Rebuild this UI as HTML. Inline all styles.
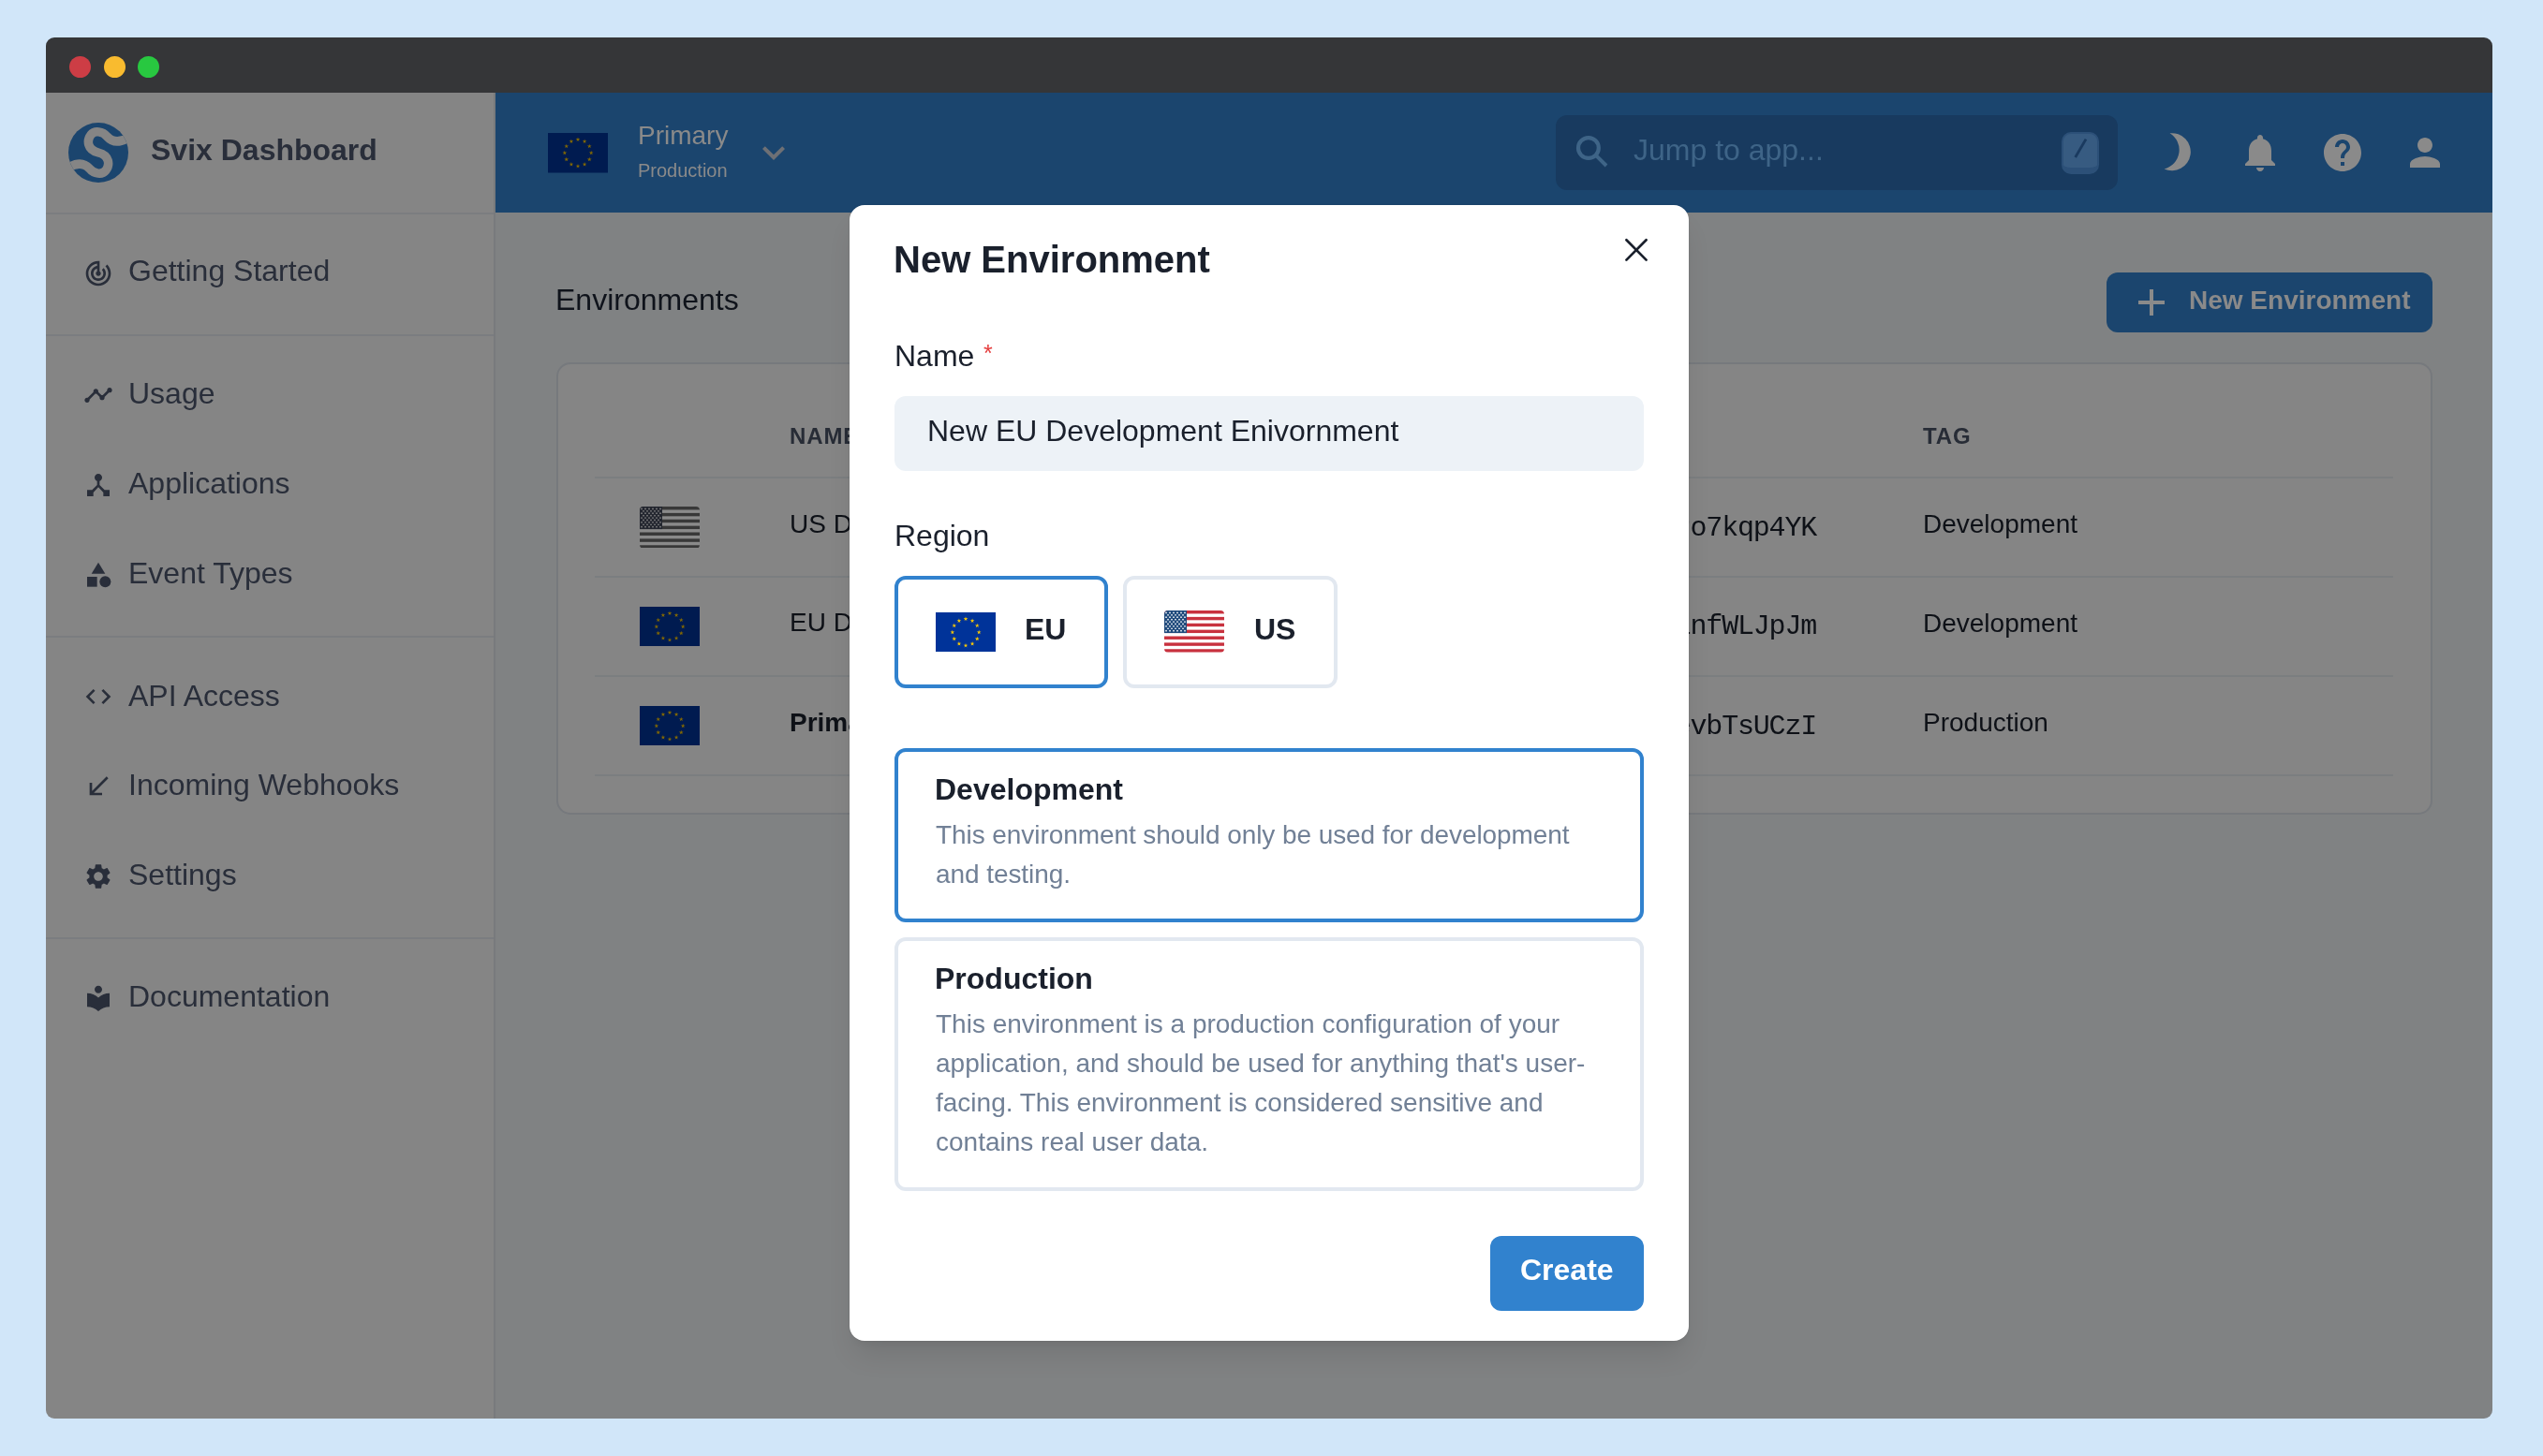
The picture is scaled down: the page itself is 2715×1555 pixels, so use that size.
<!DOCTYPE html>
<html><head><meta charset="utf-8">
<style>
*{box-sizing:border-box;margin:0;padding:0}
html,body{width:2715px;height:1555px;overflow:hidden}
body{background:#d1e6f9;font-family:"Liberation Sans",sans-serif;position:relative}
.a{position:absolute}
.t{position:absolute;white-space:nowrap;line-height:1;will-change:transform}
#win{position:absolute;left:0;top:0;width:2715px;height:1555px;clip-path:inset(40px 54px 40px 49px round 9px)}
.nav{font-size:32px;color:#292e3a;left:136.5px}
.ic{position:absolute;left:89px;width:32px;height:32px;fill:#292e3a}
.hd{fill:#858585}
.th{font-size:24px;font-weight:700;letter-spacing:0.9px;color:#272c36}
.td{font-size:28px;color:#0e1117}
.mono{font-family:"Liberation Mono",monospace;font-size:30px;letter-spacing:-1.2px;color:#0e1117;text-align:right;width:400px;left:1538.5px}
.hl{position:absolute;left:635px;width:1920px;height:2px;background:#7b7e80}
</style></head><body>
<div id="win">
  <!-- title bar -->
  <div class="a" style="left:0;top:0;width:2715px;height:99px;background:#353638"></div>
  <div class="a" style="left:74px;top:59.5px;width:23px;height:23px;border-radius:50%;background:#cd3d45"></div>
  <div class="a" style="left:110.8px;top:59.5px;width:23px;height:23px;border-radius:50%;background:#f9bb2f"></div>
  <div class="a" style="left:147.3px;top:59.5px;width:23px;height:23px;border-radius:50%;background:#28c840"></div>

  <!-- sidebar -->
  <div class="a" style="left:0;top:99px;width:529px;height:1456px;background:#858585"></div>
  <div class="a" style="left:527px;top:99px;width:2px;height:1456px;background:#787a7d"></div>
  <div class="a" style="left:0;top:227px;width:527px;height:2px;background:#7b7d80"></div>
  <div class="a" style="left:0;top:356.5px;width:527px;height:2px;background:#7b7d80"></div>
  <div class="a" style="left:0;top:679px;width:527px;height:2px;background:#7b7d80"></div>
  <div class="a" style="left:0;top:1001px;width:527px;height:2px;background:#7b7d80"></div>

  <!-- logo -->
  <svg class="a" style="left:73px;top:131px" width="64" height="64" viewBox="0 0 64 64">
    <defs><clipPath id="lc"><circle cx="32" cy="32" r="32"/></clipPath></defs>
    <circle cx="32" cy="32" r="32" fill="#1b456e"/>
    <path clip-path="url(#lc)" d="M64 16 C54 22 47 21 41.5 15 C36.5 9 28 8 24 13 C19.5 19 20 29 32 32 C44 35 44.5 45 40 51 C36 56 27.5 55 22.5 49 C17 43 10 42 0 48" fill="none" stroke="#858585" stroke-width="9.5"/>
  </svg>
  <div class="t" style="left:160.8px;top:143.6px;font-size:32px;font-weight:700;color:#292e3a">Svix Dashboard</div>

  <!-- nav -->
  <svg class="ic" style="top:276px" viewBox="0 0 24 24"><path d="M19.07 4.93l-1.41 1.41C19.1 7.79 20 9.79 20 12c0 4.42-3.58 8-8 8s-8-3.58-8-8c0-4.08 3.05-7.44 7-7.93v2.02C8.16 6.57 6 9.03 6 12c0 3.310 2.69 6 6 6s6-2.69 6-6c0-1.66-.67-3.16-1.76-4.24l-1.41 1.41C15.55 9.9 16 10.9 16 12c0 2.21-1.79 4-4 4s-4-1.790-4-4c0-1.86 1.28-3.41 3-3.86v2.14c-.6.35-1 .98-1 1.72 0 1.1.9 2 2 2s2-.9 2-2c0-.74-.4-1.38-1-1.72V2h-1C6.48 2 2 6.48 2 12s4.48 10 10 10 10-4.48 10-10c0-2.76-1.12-5.26-2.93-7.07z"/></svg>
  <div class="t nav" style="top:273.4px">Getting Started</div>

  <svg class="ic" style="top:406px" viewBox="0 0 24 24"><path d="M23 8c0 1.1-.9 2-2 2-.18 0-.35-.02-.51-.07l-3.56 3.55c.05.16.07.34.07.52 0 1.1-.9 2-2 2s-2-.9-2-2c0-.18.02-.36.07-.52l-2.55-2.55c-.16.05-.34.07-.52.07s-.36-.02-.52-.07l-4.55 4.56c.05.16.07.33.07.51 0 1.1-.9 2-2 2s-2-.9-2-2 .9-2 2-2c.18 0 .35.02.51.07l4.56-4.55C8.02 9.36 8 9.18 8 9c0-1.1.9-2 2-2s2 .9 2 2c0 .18-.02.36-.07.52l2.55 2.55c.16-.05.34-.07.52-.07s.36.02.52.07l3.55-3.56C19.02 8.350 19 8.18 19 8c0-1.1.9-2 2-2s2 .9 2 2z"/></svg>
  <div class="t nav" style="top:403.9px">Usage</div>

  <svg class="ic" style="top:502px" viewBox="0 0 24 24"><path d="M17 16l-4-4V8.82C14.16 8.4 15 7.3 15 6c0-1.66-1.34-3-3-3S9 4.34 9 6c0 1.3.84 2.4 2 2.82V12l-4 4H3v5h5v-3.05l4-4.2 4 4.2V21h5v-5h-4z"/></svg>
  <div class="t nav" style="top:499.6px">Applications</div>

  <svg class="ic" style="top:598px" viewBox="0 0 24 24"><path d="M12 2l-5.5 9h11z"/><circle cx="17.5" cy="17.5" r="4.5"/><path d="M3 13.5h8v8H3z"/></svg>
  <div class="t nav" style="top:595.5px">Event Types</div>

  <svg class="ic" style="top:727.5px" viewBox="0 0 24 24"><path d="M9.4 16.6L4.8 12l4.6-4.6L8 6l-6 6 6 6 1.4-1.4zm5.2 0l4.6-4.6-4.6-4.6L16 6l6 6-6 6-1.4-1.4z"/></svg>
  <div class="t nav" style="top:726.5px">API Access</div>

  <svg class="ic" style="top:824.2px" viewBox="0 0 24 24"><path d="M20 5.41L18.59 4 7 15.59V9H5v10h10v-2H8.41z"/></svg>
  <div class="t nav" style="top:821.9px">Incoming Webhooks</div>

  <svg class="ic" style="top:920px" viewBox="0 0 24 24"><path d="M19.14 12.94c.04-.3.06-.61.06-.94 0-.32-.02-.64-.07-.94l2.03-1.58c.18-.14.23-.41.12-.61l-1.92-3.32c-.12-.22-.37-.29-.59-.22l-2.39.96c-.5-.38-1.03-.7-1.62-.94l-.36-2.54c-.04-.24-.24-.41-.48-.41h-3.84c-.24 0-.43.17-.47.41l-.36 2.54c-.59.24-1.13.57-1.620.94l-2.39-.96c-.22-.08-.47 0-.59.22L2.74 8.87c-.12.21-.08.47.12.61l2.03 1.58c-.05.3-.09.63-.09.94s.02.64.07.94l-2.03 1.58c-.18.14-.23.41-.12.61l1.92 3.32c.12.22.37.29.59.22l2.39-.96c.5.38 1.03.7 1.62.94l.36 2.54c.05.24.24.41.48.41h3.84c.24 0 .44-.17.47-.41l.36-2.54c.59-.24 1.13-.56 1.62-.94l2.39.96c.22.08.47 0 .59-.22l1.92-3.32c.12-.22.07-.47-.12-.61l-2.01-1.58zM12 15.6c-1.98 0-3.6-1.62-3.6-3.6s1.62-3.6 3.6-3.6 3.6 1.62 3.6 3.6-1.62 3.6-3.6 3.6z"/></svg>
  <div class="t nav" style="top:918.2px">Settings</div>

  <svg class="ic" style="top:1050px" viewBox="0 0 24 24"><path d="M12 11.55C9.64 9.35 6.48 8 3 8v11c3.48 0 6.64 1.35 9 3.55 2.36-2.19 5.52-3.55 9-3.55V8c-3.48 0-6.64 1.35-9 3.55zM12 8c1.66 0 3-1.34 3-3s-1.34-3-3-3-3 1.34-3 3 1.34 3 3 3z"/></svg>
  <div class="t nav" style="top:1048.1px">Documentation</div>

  <!-- header -->
  <div class="a" style="left:529px;top:99px;width:2186px;height:128px;background:#1b456e"></div>
  
  <svg class="a" style="left:585px;top:142px" width="64" height="42.5" viewBox="0 0 64 42.5"><rect width="64" height="42.5" fill="#001b50"/><g fill="#856a00"><polygon points="32.00,4.60 32.56,6.32 34.36,6.32 32.90,7.38 33.46,9.09 32.00,8.03 30.54,9.09 31.10,7.38 29.64,6.32 31.44,6.32"/><polygon points="39.08,6.50 39.64,8.22 41.44,8.22 39.98,9.27 40.54,10.99 39.08,9.93 37.63,10.99 38.18,9.27 36.73,8.22 38.53,8.22"/><polygon points="44.27,11.69 44.83,13.40 46.63,13.40 45.17,14.46 45.73,16.17 44.27,15.11 42.81,16.17 43.37,14.46 41.91,13.40 43.71,13.40"/><polygon points="46.17,18.77 46.72,20.48 48.52,20.48 47.07,21.54 47.62,23.26 46.17,22.20 44.71,23.26 45.27,21.54 43.81,20.48 45.61,20.48"/><polygon points="44.27,25.85 44.83,27.57 46.63,27.57 45.17,28.63 45.73,30.34 44.27,29.28 42.81,30.34 43.37,28.63 41.91,27.57 43.71,27.57"/><polygon points="39.08,31.04 39.64,32.75 41.44,32.75 39.98,33.81 40.54,35.52 39.08,34.47 37.63,35.52 38.18,33.81 36.73,32.75 38.53,32.75"/><polygon points="32.00,32.94 32.56,34.65 34.36,34.65 32.90,35.71 33.46,37.42 32.00,36.36 30.54,37.42 31.10,35.71 29.64,34.65 31.44,34.65"/><polygon points="24.92,31.04 25.47,32.75 27.27,32.75 25.82,33.81 26.37,35.52 24.92,34.47 23.46,35.52 24.02,33.81 22.56,32.75 24.36,32.75"/><polygon points="19.73,25.85 20.29,27.57 22.09,27.57 20.63,28.63 21.19,30.34 19.73,29.28 18.27,30.34 18.83,28.63 17.37,27.57 19.17,27.57"/><polygon points="17.83,18.77 18.39,20.48 20.19,20.48 18.73,21.54 19.29,23.26 17.83,22.20 16.38,23.26 16.93,21.54 15.48,20.48 17.28,20.48"/><polygon points="19.73,11.69 20.29,13.40 22.09,13.40 20.63,14.46 21.19,16.17 19.73,15.11 18.27,16.17 18.83,14.46 17.37,13.40 19.17,13.40"/><polygon points="24.92,6.50 25.47,8.22 27.27,8.22 25.82,9.27 26.37,10.99 24.92,9.93 23.46,10.99 24.02,9.27 22.56,8.22 24.36,8.22"/></g></svg>
  <div class="t" style="left:681px;top:131.1px;font-size:28px;color:#8a8a8a">Primary</div>
  <div class="t" style="left:681px;top:172.1px;font-size:20px;color:#8a8a8a">Production</div>
  <svg class="a" style="left:802px;top:139.2px" width="48" height="48" viewBox="0 0 24 24"><path d="M16.59 8.59L12 13.17 7.41 8.59 6 10l6 6 6-6z" fill="#6e7075"/></svg>
  <div class="a" style="left:1661px;top:123px;width:600px;height:80px;border-radius:12px;background:#183a5f"></div>
  <svg class="a" style="left:1676px;top:138px" width="48" height="48" viewBox="0 0 48 48"><circle cx="19.9" cy="20" r="10.9" fill="none" stroke="#3e6487" stroke-width="4.2"/><path d="M27.6 27.6 L39 39" stroke="#3e6487" stroke-width="3.9"/></svg>
  <div class="t" style="left:1744px;top:143.8px;font-size:32px;color:#3e6487">Jump to app...</div>
  <div class="a" style="left:2201px;top:141px;width:40px;height:44.5px;border-radius:10px;background:#375b81;border:2px solid #2c5078;border-bottom-width:7px"></div>
  <svg class="a" style="left:2201px;top:141px" width="39" height="44" viewBox="0 0 39 44"><path d="M25.3 8.8 L15.4 25.8" stroke="#1a3a5f" stroke-width="2.8" stroke-linecap="square"/></svg>
  <svg class="a" style="left:2296px;top:134px" width="56" height="56" viewBox="0 0 56 56"><path fill="#8a8a8a" d="M20.5 8.3 A20 20 0 1 1 14.6 46.4 A20.8 20.8 0 0 0 20.5 8.3 Z"/></svg>
  <svg class="a" style="left:2388.8px;top:138.8px" width="48" height="48" viewBox="0 0 24 24"><path fill="#8a8a8a" d="M12 22c1.1 0 2-.9 2-2h-4c0 1.1.89 2 2 2zm6-6v-5c0-3.07-1.64-5.64-4.5-6.32V4c0-.83-.67-1.5-1.5-1.5s-1.5.67-1.5 1.5v.68C7.63 5.36 6 7.92 6 11v5l-2 2v1h16v-1l-2-2z"/></svg>
  <svg class="a" style="left:2476.8px;top:138.7px" width="48" height="48" viewBox="0 0 24 24"><path fill="#8a8a8a" d="M12 2C6.48 2 2 6.48 2 12s4.48 10 10 10 10-4.48 10-10S17.52 2 12 2zm1 17h-2v-2h2v2zm2.07-7.75l-.9.92C13.45 12.9 13 13.5 13 15h-2v-.5c0-1.1.45-2.1 1.17-2.83l1.24-1.26c.37-.36.59-.86.59-1.41 0-1.1-.9-2-2-2s-2 .9-2 2H8c0-2.21 1.79-4 4-4s4 1.79 4 4c0 .88-.36 1.68-.93 2.25z"/></svg>
  <svg class="a" style="left:2564.8px;top:138.7px" width="48" height="48" viewBox="0 0 24 24"><path fill="#8a8a8a" d="M12 12c2.21 0 4-1.79 4-4s-1.79-4-4-4-4 1.79-4 4 1.79 4 4 4zm0 2c-2.67 0-8 1.34-8 4v2h16v-2c0-2.66-5.330-4-8-4z"/></svg>


  <!-- content -->
  <div class="a" style="left:529px;top:227px;width:2186px;height:1328px;background:#808283"></div>
  
  <div class="t" style="left:592.5px;top:303.8px;font-size:32px;color:#0f131b">Environments</div>
  <div class="a" style="left:2249px;top:291px;width:348px;height:64px;border-radius:12px;background:#1b456e"></div>
  <svg class="a" style="left:2273px;top:299px" width="48" height="48" viewBox="0 0 24 24"><path fill="#8a8a8a" d="M19 13h-6v6h-2v-6H5v-2h6V5h2v6h6v2z"/></svg>
  <div class="t" style="left:2336.5px;top:306.5px;font-size:28px;font-weight:700;color:#8a8a8a">New Environment</div>
  <div class="a" style="left:593.5px;top:387px;width:2003px;height:483px;border-radius:15px;border:2px solid #76797d;background:#858585"></div>
  <div class="t th" style="left:842.5px;top:453.9px">NAME</div>
  <div class="t th" style="left:2053px;top:453.9px">TAG</div>
  <div class="hl" style="top:508.5px"></div>
  <div class="hl" style="top:614.6px"></div>
  <div class="hl" style="top:720.6px"></div>
  <div class="hl" style="top:826.6px"></div>
<svg class="a" style="left:683px;top:540.6px" width="64" height="44.7" viewBox="0 0 64 44.7"><defs><clipPath id="uc683540"><rect width="64" height="44.7" rx="4"/></clipPath></defs><g clip-path="url(#uc683540)"><rect width="64" height="44.7" fill="#8a8a8a"/><rect y="0.00" width="64" height="3.44" fill="#383838"/><rect y="6.88" width="64" height="3.44" fill="#383838"/><rect y="13.75" width="64" height="3.44" fill="#383838"/><rect y="20.63" width="64" height="3.44" fill="#383838"/><rect y="27.51" width="64" height="3.44" fill="#383838"/><rect y="34.38" width="64" height="3.44" fill="#383838"/><rect y="41.26" width="64" height="3.44" fill="#383838"/><rect width="24.00" height="24.07" fill="#23262f"/><g fill="#858585"><circle cx="2.00" cy="2.41" r="0.85"/><circle cx="6.00" cy="2.41" r="0.85"/><circle cx="10.00" cy="2.41" r="0.85"/><circle cx="14.00" cy="2.41" r="0.85"/><circle cx="18.00" cy="2.41" r="0.85"/><circle cx="22.00" cy="2.41" r="0.85"/><circle cx="4.00" cy="4.81" r="0.85"/><circle cx="8.00" cy="4.81" r="0.85"/><circle cx="12.00" cy="4.81" r="0.85"/><circle cx="16.00" cy="4.81" r="0.85"/><circle cx="20.00" cy="4.81" r="0.85"/><circle cx="2.00" cy="7.22" r="0.85"/><circle cx="6.00" cy="7.22" r="0.85"/><circle cx="10.00" cy="7.22" r="0.85"/><circle cx="14.00" cy="7.22" r="0.85"/><circle cx="18.00" cy="7.22" r="0.85"/><circle cx="22.00" cy="7.22" r="0.85"/><circle cx="4.00" cy="9.63" r="0.85"/><circle cx="8.00" cy="9.63" r="0.85"/><circle cx="12.00" cy="9.63" r="0.85"/><circle cx="16.00" cy="9.63" r="0.85"/><circle cx="20.00" cy="9.63" r="0.85"/><circle cx="2.00" cy="12.03" r="0.85"/><circle cx="6.00" cy="12.03" r="0.85"/><circle cx="10.00" cy="12.03" r="0.85"/><circle cx="14.00" cy="12.03" r="0.85"/><circle cx="18.00" cy="12.03" r="0.85"/><circle cx="22.00" cy="12.03" r="0.85"/><circle cx="4.00" cy="14.44" r="0.85"/><circle cx="8.00" cy="14.44" r="0.85"/><circle cx="12.00" cy="14.44" r="0.85"/><circle cx="16.00" cy="14.44" r="0.85"/><circle cx="20.00" cy="14.44" r="0.85"/><circle cx="2.00" cy="16.85" r="0.85"/><circle cx="6.00" cy="16.85" r="0.85"/><circle cx="10.00" cy="16.85" r="0.85"/><circle cx="14.00" cy="16.85" r="0.85"/><circle cx="18.00" cy="16.85" r="0.85"/><circle cx="22.00" cy="16.85" r="0.85"/><circle cx="4.00" cy="19.26" r="0.85"/><circle cx="8.00" cy="19.26" r="0.85"/><circle cx="12.00" cy="19.26" r="0.85"/><circle cx="16.00" cy="19.26" r="0.85"/><circle cx="20.00" cy="19.26" r="0.85"/><circle cx="2.00" cy="21.66" r="0.85"/><circle cx="6.00" cy="21.66" r="0.85"/><circle cx="10.00" cy="21.66" r="0.85"/><circle cx="14.00" cy="21.66" r="0.85"/><circle cx="18.00" cy="21.66" r="0.85"/><circle cx="22.00" cy="21.66" r="0.85"/></g></g></svg>
  <div class="t td" style="left:842.5px;top:545.5px;">US Development</div>
  <div class="t mono" style="top:548.6px">ro7kqp4YK</div>
  <div class="t td" style="left:2052.5px;top:545.8px">Development</div>
<svg class="a" style="left:683px;top:647.7px" width="64" height="42.5" viewBox="0 0 64 42.5"><rect width="64" height="42.5" fill="#001b50"/><g fill="#856a00"><polygon points="32.00,4.60 32.56,6.32 34.36,6.32 32.90,7.38 33.46,9.09 32.00,8.03 30.54,9.09 31.10,7.38 29.64,6.32 31.44,6.32"/><polygon points="39.08,6.50 39.64,8.22 41.44,8.22 39.98,9.27 40.54,10.99 39.08,9.93 37.63,10.99 38.18,9.27 36.73,8.22 38.53,8.22"/><polygon points="44.27,11.69 44.83,13.40 46.63,13.40 45.17,14.46 45.73,16.17 44.27,15.11 42.81,16.17 43.37,14.46 41.91,13.40 43.71,13.40"/><polygon points="46.17,18.77 46.72,20.48 48.52,20.48 47.07,21.54 47.62,23.26 46.17,22.20 44.71,23.26 45.27,21.54 43.81,20.48 45.61,20.48"/><polygon points="44.27,25.85 44.83,27.57 46.63,27.57 45.17,28.63 45.73,30.34 44.27,29.28 42.81,30.34 43.37,28.63 41.91,27.57 43.71,27.57"/><polygon points="39.08,31.04 39.64,32.75 41.44,32.75 39.98,33.81 40.54,35.52 39.08,34.47 37.63,35.52 38.18,33.81 36.73,32.75 38.53,32.75"/><polygon points="32.00,32.94 32.56,34.65 34.36,34.65 32.90,35.71 33.46,37.42 32.00,36.36 30.54,37.42 31.10,35.71 29.64,34.65 31.44,34.65"/><polygon points="24.92,31.04 25.47,32.75 27.27,32.75 25.82,33.81 26.37,35.52 24.92,34.47 23.46,35.52 24.02,33.81 22.56,32.75 24.36,32.75"/><polygon points="19.73,25.85 20.29,27.57 22.09,27.57 20.63,28.63 21.19,30.34 19.73,29.28 18.27,30.34 18.83,28.63 17.37,27.57 19.17,27.57"/><polygon points="17.83,18.77 18.39,20.48 20.19,20.48 18.73,21.54 19.29,23.26 17.83,22.20 16.38,23.26 16.93,21.54 15.48,20.48 17.28,20.48"/><polygon points="19.73,11.69 20.29,13.40 22.09,13.40 20.63,14.46 21.19,16.17 19.73,15.11 18.27,16.17 18.83,14.46 17.37,13.40 19.17,13.40"/><polygon points="24.92,6.50 25.47,8.22 27.27,8.22 25.82,9.27 26.37,10.99 24.92,9.93 23.46,10.99 24.02,9.27 22.56,8.22 24.36,8.22"/></g></svg>
  <div class="t td" style="left:842.5px;top:651.3px;">EU Development</div>
  <div class="t mono" style="top:654.4px">lnfWLJpJm</div>
  <div class="t td" style="left:2052.5px;top:651.6px">Development</div>
<svg class="a" style="left:683px;top:753.7px" width="64" height="42.5" viewBox="0 0 64 42.5"><rect width="64" height="42.5" fill="#001b50"/><g fill="#856a00"><polygon points="32.00,4.60 32.56,6.32 34.36,6.32 32.90,7.38 33.46,9.09 32.00,8.03 30.54,9.09 31.10,7.38 29.64,6.32 31.44,6.32"/><polygon points="39.08,6.50 39.64,8.22 41.44,8.22 39.98,9.27 40.54,10.99 39.08,9.93 37.63,10.99 38.18,9.27 36.73,8.22 38.53,8.22"/><polygon points="44.27,11.69 44.83,13.40 46.63,13.40 45.17,14.46 45.73,16.17 44.27,15.11 42.81,16.17 43.37,14.46 41.91,13.40 43.71,13.40"/><polygon points="46.17,18.77 46.72,20.48 48.52,20.48 47.07,21.54 47.62,23.26 46.17,22.20 44.71,23.26 45.27,21.54 43.81,20.48 45.61,20.48"/><polygon points="44.27,25.85 44.83,27.57 46.63,27.57 45.17,28.63 45.73,30.34 44.27,29.28 42.81,30.34 43.37,28.63 41.91,27.57 43.71,27.57"/><polygon points="39.08,31.04 39.64,32.75 41.44,32.75 39.98,33.81 40.54,35.52 39.08,34.47 37.63,35.52 38.18,33.81 36.73,32.75 38.53,32.75"/><polygon points="32.00,32.94 32.56,34.65 34.36,34.65 32.90,35.71 33.46,37.42 32.00,36.36 30.54,37.42 31.10,35.71 29.64,34.65 31.44,34.65"/><polygon points="24.92,31.04 25.47,32.75 27.27,32.75 25.82,33.81 26.37,35.52 24.92,34.47 23.46,35.52 24.02,33.81 22.56,32.75 24.36,32.75"/><polygon points="19.73,25.85 20.29,27.57 22.09,27.57 20.63,28.63 21.19,30.34 19.73,29.28 18.27,30.34 18.83,28.63 17.37,27.57 19.17,27.57"/><polygon points="17.83,18.77 18.39,20.48 20.19,20.48 18.73,21.54 19.29,23.26 17.83,22.20 16.38,23.26 16.93,21.54 15.48,20.48 17.28,20.48"/><polygon points="19.73,11.69 20.29,13.40 22.09,13.40 20.63,14.46 21.19,16.17 19.73,15.11 18.27,16.17 18.83,14.46 17.37,13.40 19.17,13.40"/><polygon points="24.92,6.50 25.47,8.22 27.27,8.22 25.82,9.27 26.37,10.99 24.92,9.93 23.46,10.99 24.02,9.27 22.56,8.22 24.36,8.22"/></g></svg>
  <div class="t td" style="left:842.5px;top:757.7px;font-weight:700;">Primary</div>
  <div class="t mono" style="top:760.8px">evbTsUCzI</div>
  <div class="t td" style="left:2052.5px;top:758.0px">Production</div>

</div>

<div class="a" style="left:907px;top:219px;width:896px;height:1213px;border-radius:16px;background:#fff;box-shadow:0 0 3px rgba(0,0,0,.09),0 20px 30px -6px rgba(0,0,0,.1),0 8px 12px -4px rgba(0,0,0,.05)"></div>
<div class="t" style="left:954px;top:257.3px;font-size:40px;font-weight:700;color:#1a202c">New Environment</div>
<svg class="a" style="left:1733px;top:253px" width="28" height="28" viewBox="0 0 28 28"><path d="M3.4 3.3 L24.6 24.6 M24.6 3.3 L3.4 24.6" stroke="#1a202c" stroke-width="2.7" stroke-linecap="round"/></svg>
<div class="t" style="left:955px;top:364.1px;font-size:32px;color:#1a202c">Name</div>
<div class="t" style="left:1049.8px;top:364.5px;font-size:25px;color:#e53e3e">*</div>
<div class="a" style="left:955px;top:423px;width:800px;height:80px;border-radius:12px;background:#edf2f7"></div>
<div class="t" style="left:990px;top:443.9px;font-size:32px;color:#1a202c">New EU Development Enivornment</div>
<div class="t" style="left:954.7px;top:555.8px;font-size:32px;color:#1a202c">Region</div>
<div class="a" style="left:955px;top:615px;width:228px;height:120px;border-radius:12px;border:4px solid #3182ce"></div>
<svg class="a" style="left:999px;top:653.5px" width="64" height="42.5" viewBox="0 0 64 42.5"><rect width="64" height="42.5" fill="#003399"/><g fill="#ffcc00"><polygon points="32.00,4.60 32.56,6.32 34.36,6.32 32.90,7.38 33.46,9.09 32.00,8.03 30.54,9.09 31.10,7.38 29.64,6.32 31.44,6.32"/><polygon points="39.08,6.50 39.64,8.22 41.44,8.22 39.98,9.27 40.54,10.99 39.08,9.93 37.63,10.99 38.18,9.27 36.73,8.22 38.53,8.22"/><polygon points="44.27,11.69 44.83,13.40 46.63,13.40 45.17,14.46 45.73,16.17 44.27,15.11 42.81,16.17 43.37,14.46 41.91,13.40 43.71,13.40"/><polygon points="46.17,18.77 46.72,20.48 48.52,20.48 47.07,21.54 47.62,23.26 46.17,22.20 44.71,23.26 45.27,21.54 43.81,20.48 45.61,20.48"/><polygon points="44.27,25.85 44.83,27.57 46.63,27.57 45.17,28.63 45.73,30.34 44.27,29.28 42.81,30.34 43.37,28.63 41.91,27.57 43.71,27.57"/><polygon points="39.08,31.04 39.64,32.75 41.44,32.75 39.98,33.81 40.54,35.52 39.08,34.47 37.63,35.52 38.18,33.81 36.73,32.75 38.53,32.75"/><polygon points="32.00,32.94 32.56,34.65 34.36,34.65 32.90,35.71 33.46,37.42 32.00,36.36 30.54,37.42 31.10,35.71 29.64,34.65 31.44,34.65"/><polygon points="24.92,31.04 25.47,32.75 27.27,32.75 25.82,33.81 26.37,35.52 24.92,34.47 23.46,35.52 24.02,33.81 22.56,32.75 24.36,32.75"/><polygon points="19.73,25.85 20.29,27.57 22.09,27.57 20.63,28.63 21.19,30.34 19.73,29.28 18.27,30.34 18.83,28.63 17.37,27.57 19.17,27.57"/><polygon points="17.83,18.77 18.39,20.48 20.19,20.48 18.73,21.54 19.29,23.26 17.83,22.20 16.38,23.26 16.93,21.54 15.48,20.48 17.28,20.48"/><polygon points="19.73,11.69 20.29,13.40 22.09,13.40 20.63,14.46 21.19,16.17 19.73,15.11 18.27,16.17 18.83,14.46 17.37,13.40 19.17,13.40"/><polygon points="24.92,6.50 25.47,8.22 27.27,8.22 25.82,9.27 26.37,10.99 24.92,9.93 23.46,10.99 24.02,9.27 22.56,8.22 24.36,8.22"/></g></svg>
<div class="t" style="left:1094.3px;top:656px;font-size:32px;font-weight:700;color:#1a202c">EU</div>
<div class="a" style="left:1199px;top:615px;width:229px;height:120px;border-radius:12px;border:4px solid #e2e8f0"></div>
<svg class="a" style="left:1243px;top:652.4px" width="64" height="44.7" viewBox="0 0 64 44.7"><defs><clipPath id="uc1243652"><rect width="64" height="44.7" rx="4"/></clipPath></defs><g clip-path="url(#uc1243652)"><rect width="64" height="44.7" fill="#ffffff"/><rect y="0.00" width="64" height="3.44" fill="#c8313e"/><rect y="6.88" width="64" height="3.44" fill="#c8313e"/><rect y="13.75" width="64" height="3.44" fill="#c8313e"/><rect y="20.63" width="64" height="3.44" fill="#c8313e"/><rect y="27.51" width="64" height="3.44" fill="#c8313e"/><rect y="34.38" width="64" height="3.44" fill="#c8313e"/><rect y="41.26" width="64" height="3.44" fill="#c8313e"/><rect width="24.00" height="24.07" fill="#1f4a7c"/><g fill="#ffffff"><circle cx="2.00" cy="2.41" r="0.85"/><circle cx="6.00" cy="2.41" r="0.85"/><circle cx="10.00" cy="2.41" r="0.85"/><circle cx="14.00" cy="2.41" r="0.85"/><circle cx="18.00" cy="2.41" r="0.85"/><circle cx="22.00" cy="2.41" r="0.85"/><circle cx="4.00" cy="4.81" r="0.85"/><circle cx="8.00" cy="4.81" r="0.85"/><circle cx="12.00" cy="4.81" r="0.85"/><circle cx="16.00" cy="4.81" r="0.85"/><circle cx="20.00" cy="4.81" r="0.85"/><circle cx="2.00" cy="7.22" r="0.85"/><circle cx="6.00" cy="7.22" r="0.85"/><circle cx="10.00" cy="7.22" r="0.85"/><circle cx="14.00" cy="7.22" r="0.85"/><circle cx="18.00" cy="7.22" r="0.85"/><circle cx="22.00" cy="7.22" r="0.85"/><circle cx="4.00" cy="9.63" r="0.85"/><circle cx="8.00" cy="9.63" r="0.85"/><circle cx="12.00" cy="9.63" r="0.85"/><circle cx="16.00" cy="9.63" r="0.85"/><circle cx="20.00" cy="9.63" r="0.85"/><circle cx="2.00" cy="12.03" r="0.85"/><circle cx="6.00" cy="12.03" r="0.85"/><circle cx="10.00" cy="12.03" r="0.85"/><circle cx="14.00" cy="12.03" r="0.85"/><circle cx="18.00" cy="12.03" r="0.85"/><circle cx="22.00" cy="12.03" r="0.85"/><circle cx="4.00" cy="14.44" r="0.85"/><circle cx="8.00" cy="14.44" r="0.85"/><circle cx="12.00" cy="14.44" r="0.85"/><circle cx="16.00" cy="14.44" r="0.85"/><circle cx="20.00" cy="14.44" r="0.85"/><circle cx="2.00" cy="16.85" r="0.85"/><circle cx="6.00" cy="16.85" r="0.85"/><circle cx="10.00" cy="16.85" r="0.85"/><circle cx="14.00" cy="16.85" r="0.85"/><circle cx="18.00" cy="16.85" r="0.85"/><circle cx="22.00" cy="16.85" r="0.85"/><circle cx="4.00" cy="19.26" r="0.85"/><circle cx="8.00" cy="19.26" r="0.85"/><circle cx="12.00" cy="19.26" r="0.85"/><circle cx="16.00" cy="19.26" r="0.85"/><circle cx="20.00" cy="19.26" r="0.85"/><circle cx="2.00" cy="21.66" r="0.85"/><circle cx="6.00" cy="21.66" r="0.85"/><circle cx="10.00" cy="21.66" r="0.85"/><circle cx="14.00" cy="21.66" r="0.85"/><circle cx="18.00" cy="21.66" r="0.85"/><circle cx="22.00" cy="21.66" r="0.85"/></g></g></svg>
<div class="t" style="left:1339px;top:656px;font-size:32px;font-weight:700;color:#1a202c">US</div>
<div class="a" style="left:955px;top:799px;width:800px;height:186px;border-radius:12px;border:4px solid #3182ce"></div>
<div class="t" style="left:998.4px;top:827.2px;font-size:32px;font-weight:700;color:#1a202c">Development</div>
<div class="a" style="left:999px;top:871.2px;font-size:28px;line-height:42px;color:#718096;white-space:nowrap;will-change:transform;letter-spacing:-0.07px">This environment should only be used for development<br>and testing.</div>
<div class="a" style="left:955px;top:1001px;width:800px;height:271px;border-radius:12px;border:4px solid #e2e8f0"></div>
<div class="t" style="left:998px;top:1028.6px;font-size:32px;font-weight:700;color:#1a202c">Production</div>
<div class="a" style="left:999px;top:1073.2px;font-size:28px;line-height:42px;color:#718096;white-space:nowrap;will-change:transform">This environment is a production configuration of your<br>application, and should be used for anything that's user-<br>facing. This environment is considered sensitive and<br>contains real user data.</div>
<div class="a" style="left:1591px;top:1320px;width:164px;height:80px;border-radius:12px;background:#3182ce"></div>
<div class="t" style="left:1622.7px;top:1339.9px;font-size:32px;font-weight:700;color:#fff">Create</div>

</body></html>
